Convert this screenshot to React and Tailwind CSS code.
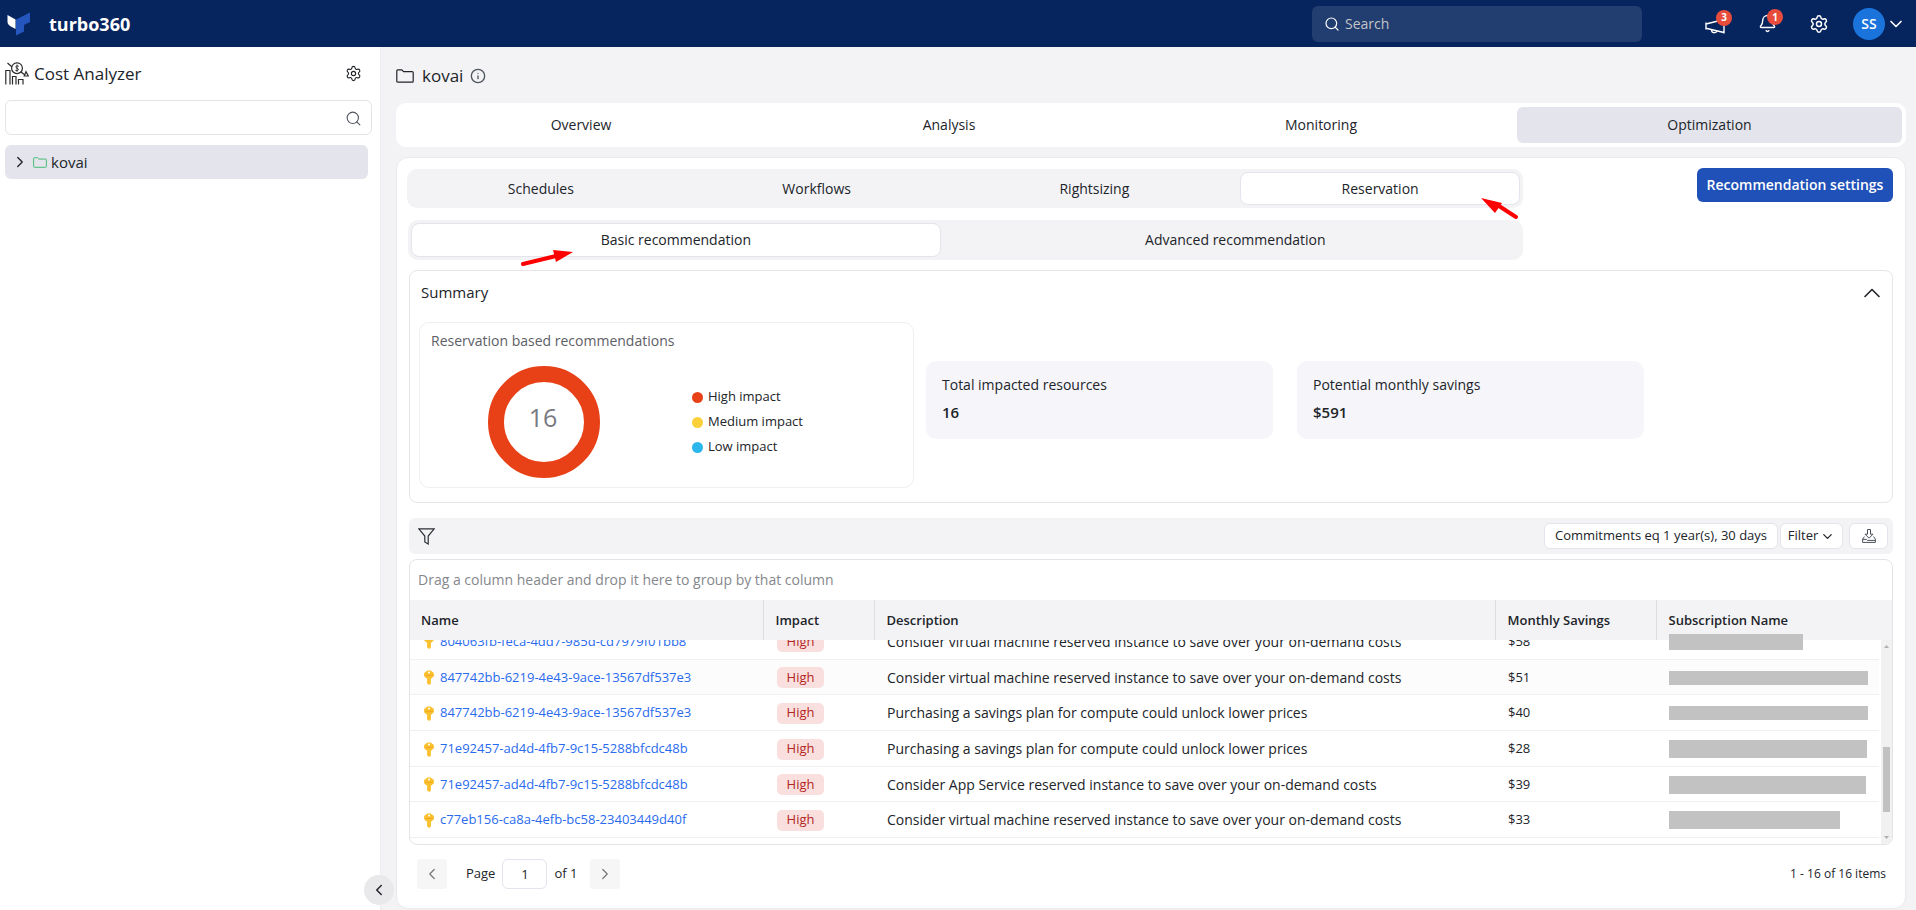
import { Bell, ChevronDown, ChevronLeft, ChevronRight, ChevronUp, Info, Search, Settings } from "lucide-react";

const MAIN_TABS = [
  { label: "Overview", size: "grow-[362]" },
  { label: "Analysis", size: "grow-[374]" },
  { label: "Monitoring", size: "grow-[370]" },
  { label: "Optimization", size: "grow-[385] ml-[11px]", active: true },
];

const SUB_TABS = [
  { label: "Schedules", size: "grow-[262]" },
  { label: "Workflows", size: "grow-[290]" },
  { label: "Rightsizing", size: "grow-[266]" },
];

const LEGEND = [
  { label: "High impact", dot: "bg-[#e84118]" },
  { label: "Medium impact", dot: "bg-[#fbd13b]" },
  { label: "Low impact", dot: "bg-[#2bb6ec]" },
];

const VM_TEXT = "Consider virtual machine reserved instance to save over your on-demand costs";
const PLAN_TEXT = "Purchasing a savings plan for compute could unlock lower prices";
const APP_TEXT = "Consider App Service reserved instance to save over your on-demand costs";

const ROWS = [
  { name: "804063fb-feca-4dd7-985d-cd7979f01bb8", description: VM_TEXT, savings: "$58", mask: "w-[134px] h-4" },
  { name: "847742bb-6219-4e43-9ace-13567df537e3", description: VM_TEXT, savings: "$51", mask: "w-[199px] h-[14px]" },
  { name: "847742bb-6219-4e43-9ace-13567df537e3", description: PLAN_TEXT, savings: "$40", mask: "w-[199px] h-[14px]" },
  { name: "71e92457-ad4d-4fb7-9c15-5288bfcdc48b", description: PLAN_TEXT, savings: "$28", mask: "w-[198px] h-[18px]" },
  { name: "71e92457-ad4d-4fb7-9c15-5288bfcdc48b", description: APP_TEXT, savings: "$39", mask: "w-[197px] h-[18px]" },
  { name: "c77eb156-ca8a-4efb-bc58-23403449d40f", description: VM_TEXT, savings: "$33", mask: "w-[171px] h-[18px]" },
];

function Logo() {
  return (
    <svg className="h-6 w-6" viewBox="0 0 24 24" aria-hidden="true">
      <path d="M0.5 3 L8.5 7.5 V17 L3 14 Q0.5 12.6 0.5 10 Z" fill="#fff" />
      <path d="M9 7.5 L23 0.5 V10 L17 13 V19.5 L9 23.5 Z" fill="#2456bd" />
    </svg>
  );
}

function CostIcon() {
  return (
    <svg className="h-6 w-6" viewBox="0 0 24 24" fill="none" stroke="#2b2b2b" strokeWidth="1.2" aria-hidden="true">
      <path d="M0.8 22.5 V8.5 H5 V22.5 M7.5 22.5 V14.5 H11 V22.5 M13.5 22.5 V17.5 H18 V22.5" />
      <path d="M2.5 1 L7 5 M16 10 L20 13" />
      <circle cx="12" cy="6.2" r="5.4" />
      <path d="M13.8 4.4 Q12 3 10.8 4.5 Q10.8 5.8 12 6.2 Q13.6 6.6 13.3 8 Q12 9.4 10.3 8.2 M12 2.6 V9.8" strokeWidth="0.9" />
      <path d="M19.2 14 L21 9.6 L23.3 14 Z" />
    </svg>
  );
}

function FolderIcon({ className }) {
  return (
    <svg className={className} viewBox="0 0 18 14" fill="none" stroke="currentColor" strokeWidth="1.2" aria-hidden="true">
      <path d="M0.8 12.2 V1.8 Q0.8 0.8 1.8 0.8 H5.8 L7.6 2.6 H16.2 Q17.2 2.6 17.2 3.6 V12.2 Q17.2 13.2 16.2 13.2 H1.8 Q0.8 13.2 0.8 12.2 Z" />
    </svg>
  );
}

function MegaphoneIcon() {
  return (
    <svg className="h-4 w-5" viewBox="0 0 20 16" fill="none" stroke="#fff" strokeWidth="1.4" aria-hidden="true">
      <path d="M1 4.5 V11.5 M1 6 L19 1.5 V14.5 L1 10.2 M19 0.5 V15.5" />
      <path d="M6.5 11.8 Q6.6 14.6 9 14.8 Q11.6 14.8 12 13.2" />
    </svg>
  );
}

function KeyIcon() {
  return (
    <svg className="h-[15px] w-[10px] shrink-0" viewBox="0 0 10 15" aria-hidden="true">
      <path d="M3.3 0.4 H6.7 L9.9 3 V6.2 L7.4 8.4 H2.6 L0.1 6.2 V3 Z" fill="#fbc02d" />
      <path d="M3.1 7.5 H6.9 V13.4 L5.4 15 L3.1 13.4 Z" fill="#fbc02d" />
      <path d="M1.4 5.4 H8.6" stroke="#ef9f1f" strokeWidth="0.8" />
      <circle cx="5" cy="2.4" r="1" fill="#fff" />
    </svg>
  );
}

function DownloadIcon() {
  return (
    <svg className="h-[14px] w-[14px]" viewBox="0 0 14 14" fill="none" stroke="#4a4f58" strokeWidth="1" aria-hidden="true">
      <path d="M5.5 0.5 H8.5 V5.2 H11 L7 9.2 L3 5.2 H5.5 Z" />
      <path d="M2.4 7.6 L0.6 10.2 V13.4 H13.4 V10.2 L11.6 7.6 M0.6 10.4 H4.5 L5.4 11.4 H13.4" />
    </svg>
  );
}

function TopBar() {
  return (
    <header className="flex h-[47px] items-center bg-[#06245e] text-white">
      <a href="#home" className="flex items-center gap-[18px] pl-[7px]">
        <Logo />
        <span className="text-lg leading-6 font-bold">turbo360</span>
      </a>
      <div className="ml-auto flex h-9 w-[330px] items-center gap-[5px] rounded-md bg-[#223d70] px-3">
        <Search className="h-4 w-4 shrink-0" strokeWidth={1.8} />
        <input aria-label="Search" placeholder="Search" className="w-full bg-transparent text-sm outline-none placeholder:text-[#c3c5ca]" />
      </div>
      <button aria-label="Announcements" className="relative ml-[63px] mt-1">
        <MegaphoneIcon />
        <span className="absolute -top-2 left-[11px] flex h-4 w-4 items-center justify-center rounded-full bg-[#e74c3c] text-[10px] font-bold">3</span>
      </button>
      <button aria-label="Notifications" className="relative ml-[33px]">
        <Bell className="h-[19px] w-[19px]" strokeWidth={1.8} />
        <span className="absolute -top-[5px] left-[9px] flex h-4 w-4 items-center justify-center rounded-full bg-[#e74c3c] text-[10px] font-bold">1</span>
      </button>
      <button aria-label="Settings" className="ml-8">
        <Settings className="h-5 w-5" strokeWidth={1.8} />
      </button>
      <button aria-label="Account" className="mr-[10px] ml-6 flex items-center gap-px">
        <span className="flex h-8 w-8 items-center justify-center rounded-full bg-[#1b74db] text-sm font-semibold">SS</span>
        <ChevronDown className="h-5 w-5" strokeWidth={2} />
      </button>
    </header>
  );
}

function Sidebar() {
  return (
    <aside className="relative w-[381px] shrink-0 border-r border-[#ececef] bg-white pl-[5px]">
      <div className="flex h-[53px] items-center gap-[5px] pr-[18px]">
        <CostIcon />
        <h1 className="text-[17px] leading-6">Cost Analyzer</h1>
        <button aria-label="Cost Analyzer settings" className="ml-auto">
          <Settings className="h-[17px] w-[17px]" strokeWidth={1.6} />
        </button>
      </div>
      <div className="mr-2 flex h-[35px] items-center rounded-md border border-[#e3e4e8] pt-[2px] pr-[9px] pl-3">
        <input aria-label="Search cost groups" className="w-full bg-transparent text-sm outline-none" />
        <Search className="h-[17px] w-[17px] shrink-0 text-[#50555e]" strokeWidth={1.5} />
      </div>
      <button className="mt-[10px] flex h-[34px] w-[363px] items-center gap-1 rounded-md bg-[#e3e4ec] pl-[6px] text-left text-[15px]">
        <ChevronRight className="h-[18px] w-[18px]" strokeWidth={1.8} />
        <FolderIcon className="h-[11px] w-[14px] text-[#3cba6e]" />
        <span>kovai</span>
      </button>
      <button aria-label="Collapse sidebar" className="absolute -right-[14px] bottom-[5px] z-20 flex h-[30px] w-[30px] items-center justify-center rounded-full bg-[#e9e9eb]">
        <ChevronLeft className="h-[18px] w-[18px]" strokeWidth={2} />
      </button>
    </aside>
  );
}

function Tabs() {
  return (
    <nav className="mt-[7px] flex h-11 rounded-[10px] bg-white p-1">
      {MAIN_TABS.map((tab) => (
        <button
          key={tab.label}
          className={`basis-0 rounded-md text-sm font-medium ${tab.size} ${tab.active ? "bg-[#e3e4ec]" : ""}`}
        >
          {tab.label}
        </button>
      ))}
    </nav>
  );
}

function OptimizationTabs() {
  return (
    <div className="flex items-start">
      <div className="w-[1116px]">
        <div className="mt-[1px] flex h-[39px] rounded-[10px] bg-[#f3f3f6] p-[3px]">
          {SUB_TABS.map((tab) => (
            <button key={tab.label} className={`basis-0 text-sm font-medium ${tab.size}`}>
              {tab.label}
            </button>
          ))}
          <button className="relative ml-[13px] grow-[278] basis-0 rounded-lg border border-[#e3e4ec] bg-white text-sm font-medium">
            Reservation
            <svg className="absolute top-[24px] right-0 h-6 w-[39px]" viewBox="0 0 39 24" aria-hidden="true">
              <path d="M19 9 L36 20" stroke="#f00" strokeWidth="4" strokeLinecap="round" />
              <path d="M1 1 L22 6 L15 16 Z" fill="#f00" />
            </svg>
          </button>
        </div>
        <div className="mt-3 ml-px flex h-10 rounded-[10px] bg-[#f3f3f6] p-[3px]">
          <button className="relative grow-[533] basis-0 rounded-lg border border-[#e3e4ec] bg-white text-sm font-medium">
            Basic recommendation
            <svg className="absolute top-[25px] left-[108px] h-5 w-[54px]" viewBox="0 0 54 20" aria-hidden="true">
              <path d="M3 15 L36 7" stroke="#f00" strokeWidth="4" strokeLinecap="round" />
              <path d="M53 3 L33 1 L36 13 Z" fill="#f00" />
            </svg>
          </button>
          <button className="grow-[575] basis-0 pl-[10px] text-sm font-medium">Advanced recommendation</button>
        </div>
      </div>
      <button className="ml-auto h-[34px] w-[196px] rounded-md bg-[#1f51b8] text-sm font-semibold text-white">
        Recommendation settings
      </button>
    </div>
  );
}

function StatCard({ label, value }) {
  return (
    <div className="h-[78px] w-[347px] rounded-[10px] bg-[#f6f6fa] px-4 pt-[13px]">
      <p className="text-sm leading-[22px]">{label}</p>
      <p className="mt-1 text-[15px] leading-6 font-semibold">{value}</p>
    </div>
  );
}

function Summary() {
  return (
    <section className="mt-[10px] ml-[2px] rounded-lg border border-[#e6e6ea] pb-[14px]">
      <div className="flex h-[51px] items-center justify-between pr-[6px] pb-2 pl-[11px]">
        <h2 className="text-[15px] font-medium">Summary</h2>
        <button aria-label="Collapse summary">
          <ChevronUp className="h-7 w-7" strokeWidth={1.4} />
        </button>
      </div>
      <div className="flex items-center pl-[9px]">
        <div className="h-[166px] w-[495px] rounded-[10px] border border-[#efeff2] px-[11px] pt-[7px]">
          <h3 className="text-sm leading-[22px] text-[#5d6066]">Reservation based recommendations</h3>
          <div className="flex items-center pt-[14px] pl-[57px]">
            <svg className="h-[112px] w-[112px]" viewBox="0 0 112 112" role="img" aria-label="16 high impact recommendations">
              <circle cx="56" cy="56" r="48" fill="none" stroke="#e84118" strokeWidth="16" />
              <text x="55" y="61" textAnchor="middle" fontSize="25" fill="#777a80">16</text>
            </svg>
            <ul className="ml-[92px]">
              {LEGEND.map((item) => (
                <li key={item.label} className="flex h-[25px] items-center gap-[5px] text-[13px]">
                  <span className={`h-[11px] w-[11px] rounded-full ${item.dot}`} />
                  {item.label}
                </li>
              ))}
            </ul>
          </div>
        </div>
        <div className="mb-[10px] ml-3 flex gap-6">
          <StatCard label="Total impacted resources" value="16" />
          <StatCard label="Potential monthly savings" value="$591" />
        </div>
      </div>
    </section>
  );
}

function Toolbar() {
  return (
    <div className="mt-[15px] ml-[2px] flex h-9 items-center rounded-md bg-[#f3f3f6] pr-[5px] pl-[9px] text-[13px]">
      <button aria-label="Filter rows">
        <svg className="h-[17px] w-[17px]" viewBox="0 0 17 17" fill="none" stroke="#2b2f36" strokeWidth="1.2" aria-hidden="true">
          <path d="M0.8 0.8 H16.2 L10.2 8 V16 L6.8 14 V8 Z" />
        </svg>
      </button>
      <button className="ml-auto h-[26px] w-[234px] rounded-md border border-[#e3e4ec] bg-white">
        Commitments eq 1 year(s), 30 days
      </button>
      <button className="ml-[2px] flex h-[26px] w-[63px] items-center justify-center gap-[2px] rounded-md border border-[#e3e4ec] bg-white">
        Filter
        <ChevronDown className="h-[15px] w-[15px]" strokeWidth={2} />
      </button>
      <button aria-label="Download" className="ml-[6px] flex h-[26px] w-[39px] items-center justify-center rounded-md border border-[#e3e4ec] bg-white">
        <DownloadIcon />
      </button>
    </div>
  );
}

function Columns() {
  return (
    <colgroup>
      <col className="w-[353px]" />
      <col className="w-[111px]" />
      <col />
      <col className="w-[161px]" />
    </colgroup>
  );
}

function RecommendationGrid() {
  return (
    <div className="mt-[5px] ml-[2px] overflow-hidden rounded-lg border border-[#e3e4e8]">
      <p className="h-10 pt-[9px] pl-2 text-sm leading-[22px] text-[#85878c]">
        Drag a column header and drop it here to group by that column
      </p>
      <table className="relative z-10 w-full table-fixed bg-[#f3f3f6] text-left text-[13px]">
        <Columns />
        <colgroup>
          <col className="w-[236px]" />
        </colgroup>
        <thead>
          <tr className="h-10">
            {["Name", "Impact", "Description", "Monthly Savings", "Subscription Name"].map((title) => (
              <th key={title} scope="col" className="border-r border-[#dcdde3] pt-[2px] pl-3 font-semibold first:pl-[11px] last:border-r-0">
                {title}
              </th>
            ))}
          </tr>
        </thead>
      </table>
      <div className="flex h-[204px]">
        <div className="-mt-[17px] min-w-0 flex-1 pr-[2px]">
          <table className="w-full table-fixed text-left text-[13px]">
            <Columns />
            <colgroup>
              <col className="w-[223px]" />
            </colgroup>
            <tbody>
              {ROWS.map((row, i) => (
                <tr key={i} className={`h-9 border-b border-[#f0f0f3] [&:nth-child(3n+2)]:h-[35px] ${i === 1 ? "bg-[#fcfcfc]" : ""}`}>
                  <td className="pt-[2px] pl-[14px]">
                    <a href={`#${row.name}`} className="flex items-center gap-[6px] text-[#2a6bee]">
                      <KeyIcon />
                      {row.name}
                    </a>
                  </td>
                  <td className="pt-[2px] pl-[14px]">
                    <span className="flex h-[21px] w-[47px] items-center justify-center rounded-[5px] bg-[#f9e0df] text-[#b3261e]">High</span>
                  </td>
                  <td className="truncate pt-[2px] pl-[13px] text-sm leading-5">{row.description}</td>
                  <td className="pt-[2px] pl-[13px]">{row.savings}</td>
                  <td className="pt-[2px] pl-[13px]">
                    <div className={`relative z-20 bg-[#c2c2c2] ${row.mask}`} />
                  </td>
                </tr>
              ))}
            </tbody>
          </table>
        </div>
        <div className="flex w-[11px] flex-col items-center bg-[#f1f1f1] py-[5px]" aria-hidden="true">
          <svg className="h-[3px] w-[5px]" viewBox="0 0 5 3"><path d="M0 3 L2.5 0 L5 3 Z" fill="#b0b0b0" /></svg>
          <div className="mt-[99px] h-[65px] w-[7px] bg-[#c1c1c1]" />
          <svg className="mt-auto h-[3px] w-[5px]" viewBox="0 0 5 3"><path d="M0 0 H5 L2.5 3 Z" fill="#b0b0b0" /></svg>
        </div>
      </div>
    </div>
  );
}

function Pager() {
  return (
    <footer className="mt-[14px] flex items-center pr-[7px] pl-[10px] text-[13px]">
      <button aria-label="Previous page" className="flex h-[30px] w-[30px] items-center justify-center rounded-[3px] bg-[#f6f6f7] text-[#777]">
        <ChevronLeft className="h-[18px] w-[18px]" strokeWidth={1.6} />
      </button>
      <label htmlFor="page" className="ml-[19px]">Page</label>
      <input id="page" defaultValue="1" className="mx-[7px] h-[30px] w-[45px] rounded-md border border-[#e3e4ec] text-center outline-none" />
      <span>of 1</span>
      <button aria-label="Next page" className="ml-[13px] flex h-[30px] w-[30px] items-center justify-center rounded-[3px] bg-[#f6f6f7] text-[#777]">
        <ChevronRight className="h-[18px] w-[18px]" strokeWidth={1.6} />
      </button>
      <span className="ml-auto text-xs">1 - 16 of 16 items</span>
    </footer>
  );
}

export default function App() {
  return (
    <div className="flex min-h-screen flex-col bg-[#f3f3f6] font-['Open_Sans',sans-serif] text-[#212429]">
      <TopBar />
      <div className="flex flex-1">
        <Sidebar />
        <main className="min-w-0 flex-1 pr-[10px] pb-px pl-[15px]">
          <div className="flex h-[49px] items-center pt-2">
            <FolderIcon className="h-[14px] w-[18px]" />
            <h2 className="ml-2 text-[17px] leading-6">kovai</h2>
            <Info className="ml-[7px] h-4 w-4 text-[#50555e]" strokeWidth={2} />
          </div>
          <Tabs />
          <div className="mt-[10px] rounded-xl border border-[#e9e9ec] bg-white pt-[10px] pr-3 pb-[19px] pl-[10px]">
            <OptimizationTabs />
            <Summary />
            <Toolbar />
            <RecommendationGrid />
            <Pager />
          </div>
        </main>
      </div>
    </div>
  );
}
